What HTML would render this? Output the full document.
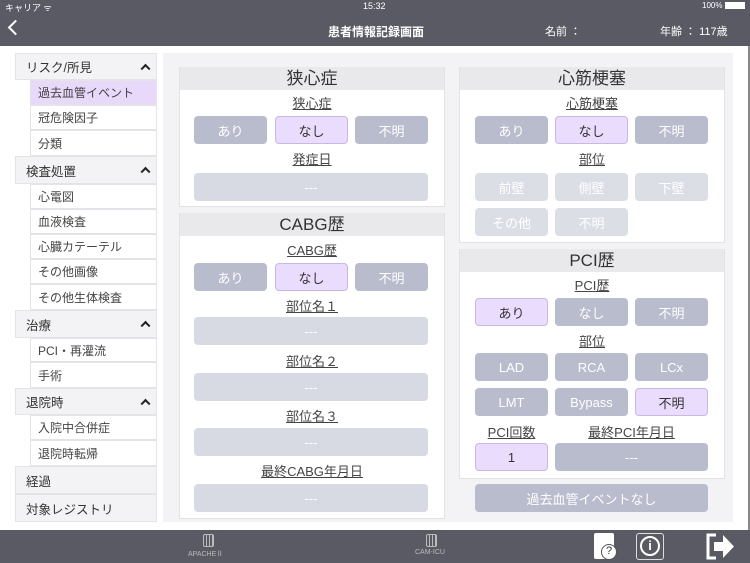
<!DOCTYPE html>
<html><head><meta charset="utf-8"><style>
*{margin:0;padding:0;box-sizing:border-box}
body{width:750px;height:563px;position:relative;overflow:hidden;background:#fff;font-family:"Liberation Sans","Noto Sans CJK JP",sans-serif;color:#444}
.a{position:absolute}
.top{left:0;top:0;width:750px;height:46px;background:#5a5a64;color:#fff}
.bot{left:0;top:530px;width:750px;height:33px;background:#5a5a64;color:#ccc}
.side{left:15px;width:142px;font-size:12px;display:flex;align-items:center;border:1px solid #e4e4e8;}
.sh{background:#f3f3f5;padding-left:10px;font-size:12.5px;color:#333}
.si{left:30px;width:127px;background:#fff;padding-left:7px;color:#444}
.car{position:absolute;right:7px;top:50%;width:7px;height:7px;border-left:2.5px solid #222;border-top:2.5px solid #222;transform:translateY(-25%) rotate(45deg)}
.main{left:163px;top:53px;width:570px;height:469px;background:#f3f3f5}
.card{background:#fff;border:1px solid #e2e2e6}
.tt{background:#e9e9ec;font-size:17px;text-align:center;color:#333;line-height:23px}
.lb{font-size:13px;text-decoration:underline;text-align:center;color:#444;margin-top:-2px}
.b{border-radius:4px;display:flex;align-items:center;justify-content:center;font-size:13px}
.g{background:#b9bccc;color:#fff}
.p{background:#eadcfc;border:1px solid #c9b7e6;color:#333}
.l{background:#dcdee6;color:#fff}
.in{background:#d7dae3;color:#fff;font-size:13px}
</style></head><body>
<div class="a top">
<div class="a" style="left:5px;top:1px;font-size:9px">キャリア ᯤ</div>
<div class="a" style="left:363px;top:1px;font-size:9px">15:32</div>
<div class="a" style="left:702px;top:1px;font-size:8px">100% <span style="display:inline-block;width:20px;height:7px;background:#fff;vertical-align:-1px"></span></div>
<div class="a" style="left:10px;top:22px;width:11px;height:11px;border-left:2.5px solid #fff;border-bottom:2.5px solid #fff;transform:rotate(45deg)"></div>
<div class="a" style="left:328px;top:23px;font-size:12px;font-weight:bold">患者情報記録画面</div>
<div class="a" style="left:545px;top:23px;font-size:11px">名前 ：</div>
<div class="a" style="left:660px;top:23px;font-size:11px">年齢 ： 117歳</div>
</div>
<div class="a" style="left:748px;top:46px;width:2px;height:484px;background:#888"></div>

<div class="a side sh" style="top:53px;height:27px">リスク/所見<span class="car"></span></div>
<div class="a side si" style="top:80px;height:25px;background:#e8d9fa">過去血管イベント</div>
<div class="a side si" style="top:105px;height:25px">冠危険因子</div>
<div class="a side si" style="top:130px;height:26px">分類</div>
<div class="a side sh" style="top:156px;height:28px">検査処置<span class="car"></span></div>
<div class="a side si" style="top:184px;height:25px">心電図</div>
<div class="a side si" style="top:209px;height:25px">血液検査</div>
<div class="a side si" style="top:234px;height:25px">心臓カテーテル</div>
<div class="a side si" style="top:259px;height:25px">その他画像</div>
<div class="a side si" style="top:284px;height:26px">その他生体検査</div>
<div class="a side sh" style="top:310px;height:28px">治療<span class="car"></span></div>
<div class="a side si" style="top:338px;height:24px">PCI・再灌流</div>
<div class="a side si" style="top:362px;height:26px">手術</div>
<div class="a side sh" style="top:388px;height:27px">退院時<span class="car"></span></div>
<div class="a side si" style="top:415px;height:25px">入院中合併症</div>
<div class="a side si" style="top:440px;height:26px">退院時転帰</div>
<div class="a side sh" style="top:466px;height:28px">経過</div>
<div class="a side sh" style="top:494px;height:28px">対象レジストリ</div>

<div class="a main"></div>

<div class="a card" style="left:179px;top:67px;width:266px;height:140px"></div>
<div class="a tt" style="left:180px;top:67px;width:264px">狭心症</div>
<div class="a lb" style="left:180px;top:95px;width:264px">狭心症</div>
<div class="a b g" style="left:194px;top:116px;width:73px;height:28px">あり</div>
<div class="a b p" style="left:275px;top:116px;width:73px;height:28px">なし</div>
<div class="a b g" style="left:355px;top:116px;width:73px;height:28px">不明</div>
<div class="a lb" style="left:180px;top:151px;width:264px">発症日</div>
<div class="a b in" style="left:194px;top:173px;width:234px;height:28px">---</div>

<div class="a card" style="left:179px;top:213px;width:266px;height:306px"></div>
<div class="a tt" style="left:180px;top:213px;width:264px">CABG歴</div>
<div class="a lb" style="left:180px;top:242px;width:264px">CABG歴</div>
<div class="a b g" style="left:194px;top:263px;width:73px;height:28px">あり</div>
<div class="a b p" style="left:275px;top:263px;width:73px;height:28px">なし</div>
<div class="a b g" style="left:355px;top:263px;width:73px;height:28px">不明</div>
<div class="a lb" style="left:180px;top:298px;width:264px">部位名１</div>
<div class="a b in" style="left:194px;top:317px;width:234px;height:28px">---</div>
<div class="a lb" style="left:180px;top:353px;width:264px">部位名２</div>
<div class="a b in" style="left:194px;top:373px;width:234px;height:28px">---</div>
<div class="a lb" style="left:180px;top:408px;width:264px">部位名３</div>
<div class="a b in" style="left:194px;top:428px;width:234px;height:28px">---</div>
<div class="a lb" style="left:180px;top:463px;width:264px">最終CABG年月日</div>
<div class="a b in" style="left:194px;top:484px;width:234px;height:28px">---</div>

<div class="a card" style="left:459px;top:67px;width:266px;height:176px"></div>
<div class="a tt" style="left:460px;top:67px;width:264px">心筋梗塞</div>
<div class="a lb" style="left:460px;top:95px;width:264px">心筋梗塞</div>
<div class="a b g" style="left:475px;top:116px;width:73px;height:28px">あり</div>
<div class="a b p" style="left:555px;top:116px;width:73px;height:28px">なし</div>
<div class="a b g" style="left:635px;top:116px;width:73px;height:28px">不明</div>
<div class="a lb" style="left:460px;top:151px;width:264px">部位</div>
<div class="a b l" style="left:475px;top:173px;width:73px;height:28px">前壁</div>
<div class="a b l" style="left:555px;top:173px;width:73px;height:28px">側壁</div>
<div class="a b l" style="left:635px;top:173px;width:73px;height:28px">下壁</div>
<div class="a b l" style="left:475px;top:208px;width:73px;height:28px">その他</div>
<div class="a b l" style="left:555px;top:208px;width:73px;height:28px">不明</div>

<div class="a card" style="left:459px;top:249px;width:266px;height:230px"></div>
<div class="a tt" style="left:460px;top:249px;width:264px">PCI歴</div>
<div class="a lb" style="left:460px;top:277px;width:264px">PCI歴</div>
<div class="a b p" style="left:475px;top:298px;width:73px;height:28px">あり</div>
<div class="a b g" style="left:555px;top:298px;width:73px;height:28px">なし</div>
<div class="a b g" style="left:635px;top:298px;width:73px;height:28px">不明</div>
<div class="a lb" style="left:460px;top:333px;width:264px">部位</div>
<div class="a b g" style="left:475px;top:353px;width:73px;height:28px">LAD</div>
<div class="a b g" style="left:555px;top:353px;width:73px;height:28px">RCA</div>
<div class="a b g" style="left:635px;top:353px;width:73px;height:28px">LCx</div>
<div class="a b g" style="left:475px;top:388px;width:73px;height:28px">LMT</div>
<div class="a b g" style="left:555px;top:388px;width:73px;height:28px">Bypass</div>
<div class="a b p" style="left:635px;top:388px;width:73px;height:28px">不明</div>
<div class="a lb" style="left:475px;top:424px;width:73px">PCI回数</div>
<div class="a lb" style="left:555px;top:424px;width:153px">最終PCI年月日</div>
<div class="a b p" style="left:475px;top:443px;width:73px;height:28px">1</div>
<div class="a b g" style="left:555px;top:443px;width:153px;height:28px">---</div>
<div class="a b g" style="left:475px;top:484px;width:233px;height:28px">過去血管イベントなし</div>

<div class="a bot">
<div class="a" style="left:203px;top:4px;width:11px;height:13px;border:1px solid #bbb;border-radius:2px;background:repeating-linear-gradient(90deg,transparent 0 2px,#bbb 2px 3px)"></div>
<div class="a" style="left:188px;top:19px;font-size:7px;color:#bbb">APACHEⅡ</div>
<div class="a" style="left:426px;top:4px;width:11px;height:13px;border:1px solid #bbb;border-radius:2px;background:repeating-linear-gradient(90deg,transparent 0 2px,#bbb 2px 3px)"></div>
<div class="a" style="left:415px;top:19px;font-size:7px;color:#bbb">CAM-ICU</div>
<div class="a" style="left:594px;top:3px;width:20px;height:26px;background:#fff;border-radius:2px"></div>
<div class="a" style="left:601px;top:14px;width:16px;height:16px;border-radius:50%;background:#fff;border:1.5px solid #555;color:#333;font-size:11px;text-align:center;line-height:13px">?</div>
<div class="a" style="left:636px;top:3px;width:28px;height:27px;border:1.5px solid #ddd;border-radius:3px"></div>
<div class="a" style="left:640px;top:6px;width:20px;height:20px;border-radius:50%;border:2px solid #fff;color:#fff;font-weight:bold;font-size:13px;text-align:center;line-height:16px">i</div>
<svg class="a" style="left:706px;top:3px" width="30" height="27" viewBox="0 0 30 27"><path d="M10 2H2V25H10" fill="none" stroke="#fff" stroke-width="3"/><path d="M8 9H17V2L28 13.5L17 25V18H8Z" fill="#fff"/></svg>
</div>
</body></html>
